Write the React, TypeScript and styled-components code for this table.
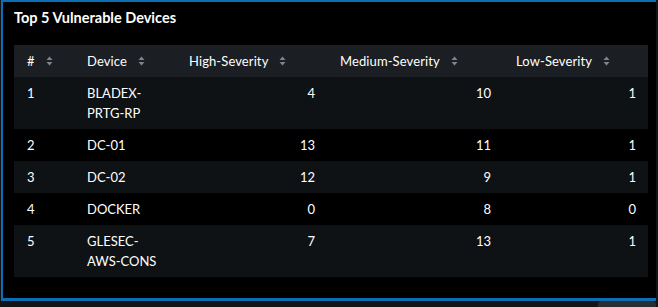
import styled, { createGlobalStyle } from "styled-components"

const rows = [
  { id: 1, device: "BLADEX-PRTG-RP", high: 4, medium: 10, low: 1 },
  { id: 2, device: "DC-01", high: 13, medium: 11, low: 1 },
  { id: 3, device: "DC-02", high: 12, medium: 9, low: 1 },
  { id: 4, device: "DOCKER", high: 0, medium: 8, low: 0 },
  { id: 5, device: "GLESEC-AWS-CONS", high: 7, medium: 13, low: 1 },
]

const columns = [
  { label: "#", width: 60 },
  { label: "Device", width: 102 },
  { label: "High-Severity", width: 151 },
  { label: "Medium-Severity", width: 176 },
  { label: "Low-Severity", width: 145 },
]

const SortIcon = () => (
  <svg width="7" height="10" viewBox="0 0 7 10">
    <path d="M3.5 0.5 L6.5 4 L0.5 4 Z" fill="currentColor" />
    <path d="M3.5 9.5 L6.5 6 L0.5 6 Z" fill="currentColor" />
  </svg>
)

const App = () => (
  <>
    <GlobalStyle />
    <Page>
      <Panel>
        <Title>Top 5 Vulnerable Devices</Title>
        <Table>
          <colgroup>
            {columns.map(c => (
              <col key={c.label} style={{ width: c.width }} />
            ))}
          </colgroup>
          <thead>
            <tr>
              {columns.map(c => (
                <Th key={c.label}>
                  <HeadLabel>
                    {c.label}
                    <Sort>
                      <SortIcon />
                    </Sort>
                  </HeadLabel>
                </Th>
              ))}
            </tr>
          </thead>
          <tbody>
            {rows.map((r, i) => (
              <Row key={r.id} $striped={i % 2 === 0}>
                <Td>{r.id}</Td>
                <Td>{r.device}</Td>
                <Td $num>{r.high}</Td>
                <Td $num>{r.medium}</Td>
                <Td $num>{r.low}</Td>
              </Row>
            ))}
          </tbody>
        </Table>
      </Panel>
      <Footer>
        <ScrollThumb />
      </Footer>
    </Page>
  </>
)

export default App

const GlobalStyle = createGlobalStyle`
  html, body {
    margin: 0;
    background: #121417;
  }
  body {
    font-family: Lato, "Open Sans", sans-serif;
    color: #ffffff;
  }
`
const Page = styled.div`
  width: 658px;
  height: 307px;
  display: flex;
  flex-direction: column;
  padding-left: 1px;
  box-sizing: border-box;
  overflow: hidden;
`
const Panel = styled.div`
  width: 655px;
  height: 303px;
  box-sizing: border-box;
  background: #000;
  border-top: 2px solid #0a6fb4;
  border-left: 2px solid #0a6fb4;
  border-bottom: 3px solid #0a6fb4;
  padding: 6px 0 0 11px;
`
const Title = styled.h2`
  margin: 0 0 17px;
  font-size: 14.5px;
  line-height: 20px;
  font-weight: 700;
  color: #fff;
`
const Table = styled.table`
  width: 634px;
  border-collapse: collapse;
  table-layout: fixed;
  font-size: 13px;
`
const Th = styled.th`
  background: #1b1e22;
  height: 32px;
  padding: 0 12px 0 13px;
  text-align: left;
  font-weight: 400;
  color: #fff;
  letter-spacing: 0.1px;
`
const HeadLabel = styled.span`
  display: inline-flex;
  align-items: center;
  gap: 11px;
  white-space: nowrap;
`
const Sort = styled.span`
  display: inline-flex;
  color: #7f858c;
`
const Row = styled.tr<{ $striped: boolean }>`
  background: ${p => (p.$striped ? "#0f1215" : "#000")};
`
const Td = styled.td<{ $num?: boolean }>`
  padding: 6px 12px 6px 13px;
  line-height: 20px;
  vertical-align: top;
  text-align: ${p => (p.$num ? "right" : "left")};
  word-break: break-word;
  color: #fff;
`
const Footer = styled.div`
  flex: 1;
  display: flex;
  justify-content: flex-end;
  align-items: flex-start;
`
const ScrollThumb = styled.div`
  width: 58px;
  height: 6px;
  margin-right: 2px;
  border-radius: 4px 4px 0 0;
  background: #2a2d32;
`
